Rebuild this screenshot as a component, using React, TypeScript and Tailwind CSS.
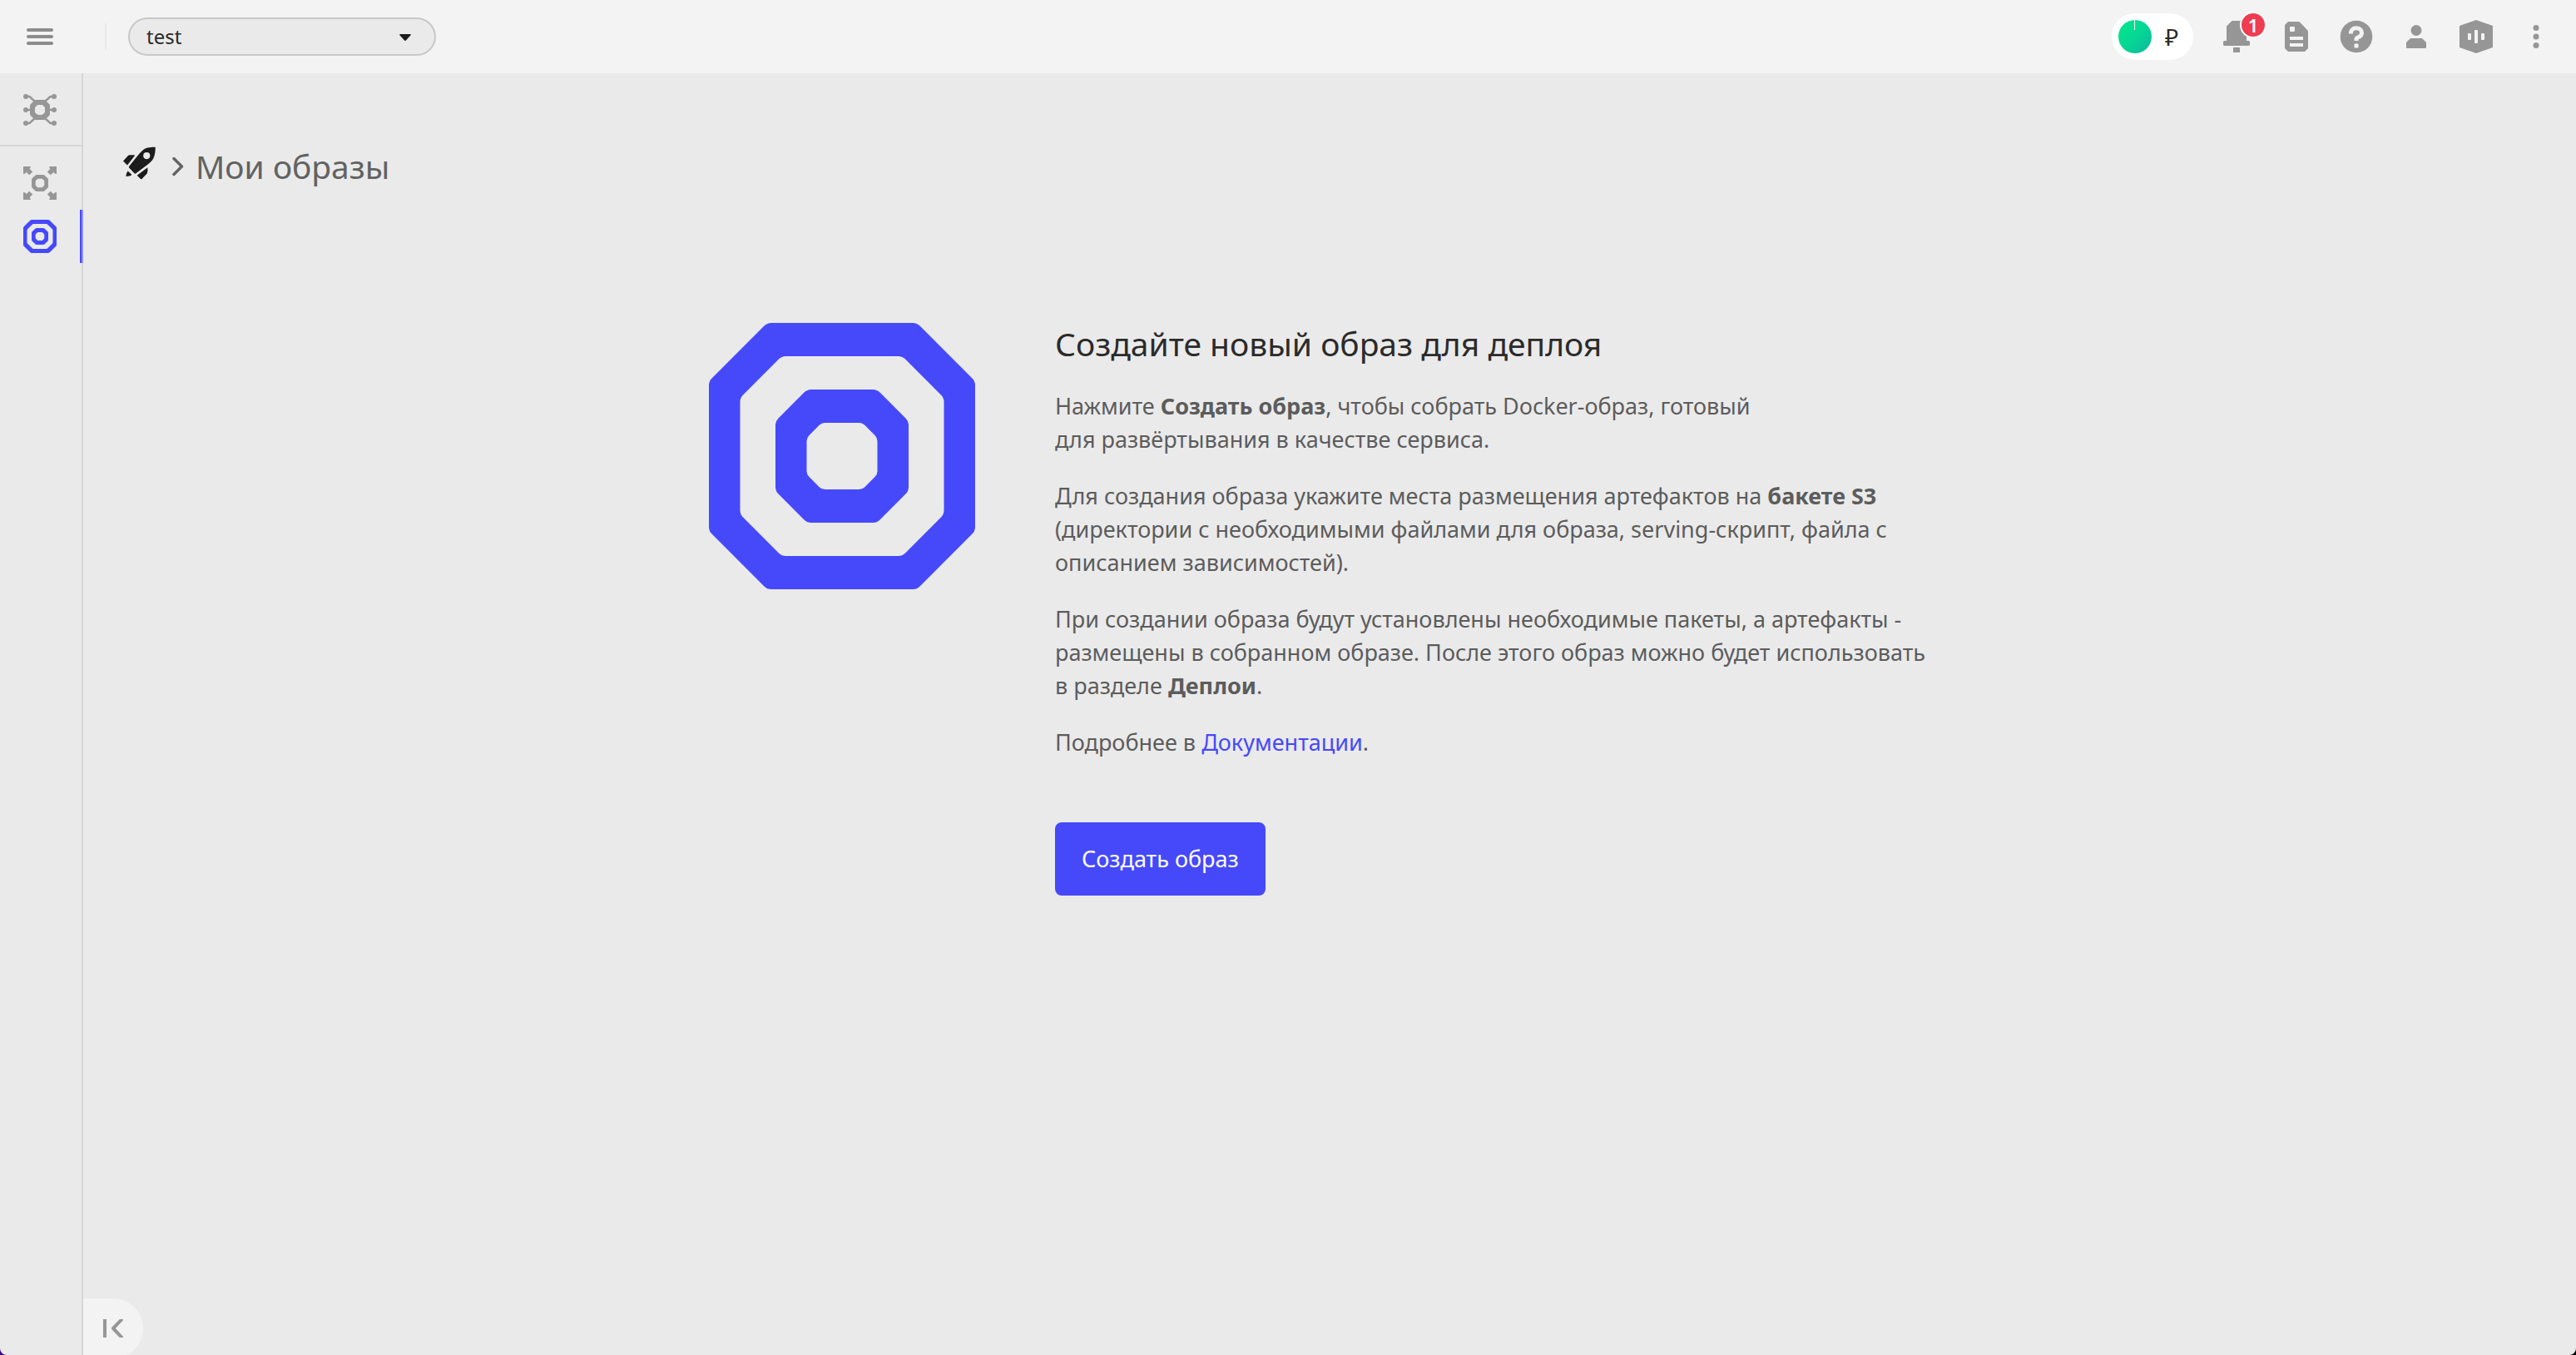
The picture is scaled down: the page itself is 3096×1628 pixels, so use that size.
import type { ReactNode } from "react";

/** Octagon with slightly rounded corners; `cut` is the length of the bevel. */
function octagon(x1: number, y1: number, x2: number, y2: number, cut: number, r: number) {
  const pts = [
    [x1 + cut, y1],
    [x2 - cut, y1],
    [x2, y1 + cut],
    [x2, y2 - cut],
    [x2 - cut, y2],
    [x1 + cut, y2],
    [x1, y2 - cut],
    [x1, y1 + cut],
  ];
  const n = pts.length;
  const towards = (a: number[], b: number[]) => {
    const len = Math.hypot(b[0] - a[0], b[1] - a[1]);
    return [a[0] + ((b[0] - a[0]) * r) / len, a[1] + ((b[1] - a[1]) * r) / len];
  };
  return (
    pts
      .map((p, i) => {
        const from = towards(p, pts[(i + n - 1) % n]);
        const to = towards(p, pts[(i + 1) % n]);
        return `${i === 0 ? "M" : "L"}${from.join(" ")}Q${p.join(" ")} ${to.join(" ")}`;
      })
      .join("") + "Z"
  );
}

function Icon({ children, className = "" }: { children: ReactNode; className?: string }) {
  return (
    <svg viewBox="0 0 40 40" className={`size-10 shrink-0 ${className}`} fill="currentColor" aria-hidden="true">
      {children}
    </svg>
  );
}

function ImagesLogo() {
  return (
    <svg viewBox="0 0 320 320" className="size-80 shrink-0 text-[#4649fa]" fill="currentColor" aria-hidden="true">
      <path
        fillRule="evenodd"
        d={octagon(0, 0, 320, 320, 70, 5) + octagon(37.5, 40, 282.5, 280, 50, 5)}
      />
      <path
        fillRule="evenodd"
        d={octagon(80, 80, 240, 240, 38, 5) + octagon(117.5, 120, 202.5, 200, 18, 4)}
      />
    </svg>
  );
}

function ChipIcon() {
  return (
    <Icon>
      <path fillRule="evenodd" d={octagon(8, 8, 32, 32, 6, 1) + octagon(14, 14, 26, 26, 3, 1)} />
      <path
        fill="none"
        stroke="currentColor"
        strokeWidth="2.4"
        d="M3 4H7.500L14 10M37 4H32.500L26 10M3 36H7.500L14 30M37 36H32.500L26 30M3 20H9M37 20H31"
      />
      {[4, 20, 36].map((y) => (
        <g key={y}>
          <circle cx="3" cy={y} r="3" />
          <circle cx="37" cy={y} r="3" />
        </g>
      ))}
    </Icon>
  );
}

function DeployIcon() {
  const arrow = "M0 0H9L7.700 2.900L11.200 6.500L7.200 10.300L3.500 6.800L2.500 8.500L0 9Z";
  return (
    <Icon>
      <path fillRule="evenodd" d={octagon(10, 10, 30, 30, 5, 1) + octagon(14.7, 14.7, 25.3, 25.3, 2.5, 0.8)} />
      <path d={arrow} />
      <path d={arrow} transform="matrix(-1 0 0 1 40 0)" />
      <path d={arrow} transform="matrix(1 0 0 -1 0 40)" />
      <path d={arrow} transform="matrix(-1 0 0 -1 40 40)" />
    </Icon>
  );
}

function ImagesIcon() {
  return (
    <Icon>
      <path fillRule="evenodd" d={octagon(0, 0, 40, 40, 9, 1) + octagon(4.5, 5, 35.5, 35, 7, 1)} />
      <path fillRule="evenodd" d={octagon(10, 10, 30, 30, 5, 1) + octagon(14.7, 15, 25.3, 25, 2.5, 0.8)} />
    </Icon>
  );
}

function RocketIcon() {
  return (
    <Icon className="text-[#1c1c1c]">
      <path
        fillRule="evenodd"
        d="M38.700 0.700C34 0.700 28.500 1 25.500 3C22.500 5 20 8 17.500 11L7.200 23.800Q6.500 24.800 7.300 25.700L13.500 32.300Q14.400 33 15.400 32.200L29 22C32 19.500 35 17.500 36.700 13.500C38.300 9.500 38.900 5 38.700 0.700ZM28.300 7A4.100 4.100 0 1 1 28.300 15.200A4.100 4.100 0 1 1 28.300 7Z"
      />
      <path d="M0 17.500L5.500 11.500Q6.500 10.300 8 10.300H13.500L14 11L5 22.500Z" />
      <path d="M16.700 34.700L29.300 25.300Q30 29 28.700 32.500L22.500 39Q21.700 39.700 21 39Z" />
      <path d="M5.700 29.500L10.300 33.800Q9.500 35.300 7.500 35.400L3.300 36Q3.600 31.500 5.700 29.500Z" />
    </Icon>
  );
}

const BellIcon = () => (
  <Icon>
    <path d="M14.500 1H25.500L32 7V25H34.500Q36 25 36 26.500V29.500Q36 31 34.500 31H5.500Q4 31 4 29.500V26.500Q4 25 5.500 25H8V7.500Z" />
    <path d="M16 33H24V39H16Z" />
  </Icon>
);

const DocumentIcon = () => (
  <Icon>
    <path
      fillRule="evenodd"
      d="M10 2H22.500Q23.500 2 24.300 2.800L33.200 12.200Q34 13 34 14V34L30 38H10L6 34V6ZM13 8Q12 8 12 9V13Q12 14 13 14H17Q18 14 18 13V9Q18 8 17 8ZM12 20V24H28V20ZM12 28V32H28V28Z"
    />
  </Icon>
);

const HelpIcon = () => (
  <Icon>
    <circle cx="20" cy="20" r="19.300" />
    <g className="text-[#f3f3f3]">
      <path
        d="M13.300 16.600C13.300 12 16 9.800 19.800 9.800C23.700 9.800 26.500 12 26.500 15.600C26.500 18.600 24.500 20.200 22 20.900Q20 21.500 20 23V25"
        fill="none"
        stroke="currentColor"
        strokeWidth="5"
        strokeLinejoin="round"
      />
      <rect x="17.500" y="28.600" width="5" height="5" rx="1" fill="currentColor" />
    </g>
  </Icon>
);

const PersonIcon = () => (
  <Icon>
    <circle cx="20" cy="12.500" r="6.500" />
    <path d="M13 22H27L32 27V33Q32 34 31 34H9Q8 34 8 33V27Z" />
  </Icon>
);

const VoiceIcon = () => (
  <Icon>
    <path d="M20 0L40 7V33L20 40L0 33V7Z" />
    <g fill="#f3f3f3">
      <rect x="10" y="16" width="4" height="8" rx="1" />
      <rect x="18" y="12" width="4" height="16" rx="1" />
      <rect x="26" y="16" width="4" height="8" rx="1" />
    </g>
  </Icon>
);

const MoreIcon = () => (
  <Icon>
    <circle cx="20" cy="9.500" r="3.500" />
    <circle cx="20" cy="20" r="3.500" />
    <circle cx="20" cy="30.500" r="3.500" />
  </Icon>
);

const actions: { label: string; icon: ReactNode; count?: number }[] = [
  { label: "Уведомления", icon: <BellIcon />, count: 1 },
  { label: "Документы", icon: <DocumentIcon /> },
  { label: "Помощь", icon: <HelpIcon /> },
  { label: "Профиль", icon: <PersonIcon /> },
  { label: "Ассистент", icon: <VoiceIcon /> },
  { label: "Ещё", icon: <MoreIcon /> },
];

function Header() {
  return (
    <header className="flex h-22 shrink-0 items-center bg-[#f3f3f3] px-3">
      <button type="button" aria-label="Меню" className="ml-5 flex w-8 flex-col gap-1">
        <span className="h-1 w-full rounded-xs bg-[#8c8c8c]" />
        <span className="h-1 w-full rounded-xs bg-[#8c8c8c]" />
        <span className="h-1 w-full rounded-xs bg-[#8c8c8c]" />
      </button>
      <span className="ml-[62px] h-8 w-0.5 bg-[#e9e9e9]" />
      <div className="relative ml-[26px] w-[370px]">
        <select
          aria-label="Проект"
          className="h-[46px] w-full appearance-none rounded-full border-2 border-[#c8c8c8] bg-[#eaeaea] px-5 text-2xl leading-none text-[#2b2b2b]"
        >
          <option>test</option>
        </select>
        <svg
          viewBox="0 0 14 8"
          className="pointer-events-none absolute top-5 right-[30px] h-2 w-3.5 text-[#1c1c1c]"
          fill="currentColor"
          aria-hidden="true"
        >
          <path d="M1 0H13Q14.300 0.500 13.400 1.600L8.200 7.300Q7 8.500 5.800 7.300L0.600 1.600Q-0.300 0.500 1 0Z" />
        </svg>
      </div>

      <button
        type="button"
        aria-label="Баланс"
        className="mr-4 ml-auto flex h-14 w-[98px] items-center gap-4 rounded-full bg-white px-2 text-[28px] text-[#2b2b2b]"
      >
        <svg viewBox="0 0 40 40" className="size-10 shrink-0" aria-hidden="true">
          <defs>
            <linearGradient id="balance" x1="0.2" y1="0.1" x2="0.95" y2="0.85">
              <stop offset="0" stopColor="#00e58c" />
              <stop offset="0.5" stopColor="#06d695" />
              <stop offset="1" stopColor="#0cbd9c" />
            </linearGradient>
          </defs>
          <circle cx="20" cy="20" r="20" fill="url(#balance)" />
          <path d="M19.500 0V12" stroke="#fff" />
        </svg>
        <span>₽</span>
      </button>
      {actions.map(({ label, icon, count }) => (
        <button
          key={label}
          type="button"
          aria-label={label}
          className="relative flex h-18 w-18 items-center justify-center text-[#969696]"
        >
          {icon}
          {count !== undefined && (
            <span className="absolute top-1.5 right-0 flex size-8 items-center justify-center rounded-full border-2 border-white bg-[#ee3d50] text-[22px] leading-none font-semibold text-white">
              {count}
            </span>
          )}
        </button>
      ))}
    </header>
  );
}

function Sidebar() {
  return (
    <aside className="w-25 shrink-0 border-r-2 border-[#d6d6d6] text-[#969696]">
      <nav>
        <div className="border-b-2 border-[#d6d6d6] pt-3 pb-[10px]">
          <a href="#platform" aria-label="Платформа" className="flex h-16 w-24 items-center justify-center">
            <ChipIcon />
          </a>
        </div>
        <div className="pt-3">
          <a href="#deploys" aria-label="Деплои" className="flex h-16 w-24 items-center justify-center">
            <DeployIcon />
          </a>
          <a
            href="#images"
            aria-label="Мои образы"
            aria-current="page"
            className="relative flex h-16 w-24 items-center justify-center text-[#4649fa]"
          >
            <ImagesIcon />
            <span className="absolute inset-y-0 left-full w-1 border-r-2 border-[#8f90ef] bg-[#4649fa]" />
          </a>
        </div>
      </nav>
    </aside>
  );
}

export default function App() {
  return (
    <div className="min-h-screen bg-linear-to-r from-[#3a0a86] to-black font-['Noto_Sans',sans-serif]">
      <div className="flex min-h-screen flex-col overflow-hidden rounded-b-lg bg-[#eaeaea]">
        <Header />
        <div className="flex grow">
          <Sidebar />
          <main className="relative grow pt-22">
            <div className="flex h-12 pl-12">
              <a href="#home" aria-label="Главная" className="h-10">
                <RocketIcon />
              </a>
              <svg
                viewBox="0 0 14 24"
                className="ml-[19px] h-6 w-3.5 self-center text-[#626262]"
                fill="none"
                stroke="currentColor"
                strokeWidth="3.4"
                strokeLinecap="round"
                strokeLinejoin="round"
                aria-hidden="true"
              >
                <path d="M2 2.500L11.500 12L2 21.500" />
              </svg>
              <h1 className="ml-3.5 text-[39px] leading-12 text-[#626262]">Мои образы</h1>
            </div>

            <section className="mx-auto mt-41 flex max-w-[1492px] items-start gap-24">
              <ImagesLogo />
              <div className="flex-1 text-[27px] leading-10 text-[#5c5c5c]">
                <h2 className="text-[39px] leading-[50px] text-[#2b2b2b]">Создайте новый образ для деплоя</h2>
                <div className="mt-[30px] flex flex-col gap-7">
                  <p>
                    Нажмите <b>Создать образ</b>, чтобы собрать Docker-образ, готовый
                    <br />
                    для развёртывания в качестве сервиса.
                  </p>
                  <p>
                    Для создания образа укажите места размещения артефактов на <b>бакете S3</b>
                    <br />
                    (директории с необходимыми файлами для образа, serving-скрипт, файла с
                    <br />
                    описанием зависимостей).
                  </p>
                  <p>
                    При создании образа будут установлены необходимые пакеты, а артефакты -
                    <br />
                    размещены в собранном образе. После этого образ можно будет использовать
                    <br />в разделе <b>Деплои</b>.
                  </p>
                  <p>
                    Подробнее в{" "}
                    <a href="#docs" className="text-[#4649fa]">
                      Документации
                    </a>
                    .
                  </p>
                </div>
                <button type="button" className="mt-19 h-22 rounded-lg bg-[#4649fa] px-8 text-white">
                  Создать образ
                </button>
              </div>
            </section>

            <button
              type="button"
              aria-label="Свернуть меню"
              className="absolute -bottom-1 left-0 flex size-18 items-center justify-center rounded-r-full bg-[#f3f3f3] text-[#969696]"
            >
              <svg viewBox="0 0 24 22" className="h-[22px] w-6" fill="none" stroke="currentColor" strokeWidth="4" aria-hidden="true">
                <path d="M2 0V22" />
                <path d="M23 -0.500L12 11L23 22.500" strokeLinejoin="round" />
              </svg>
            </button>
          </main>
        </div>
      </div>
    </div>
  );
}
